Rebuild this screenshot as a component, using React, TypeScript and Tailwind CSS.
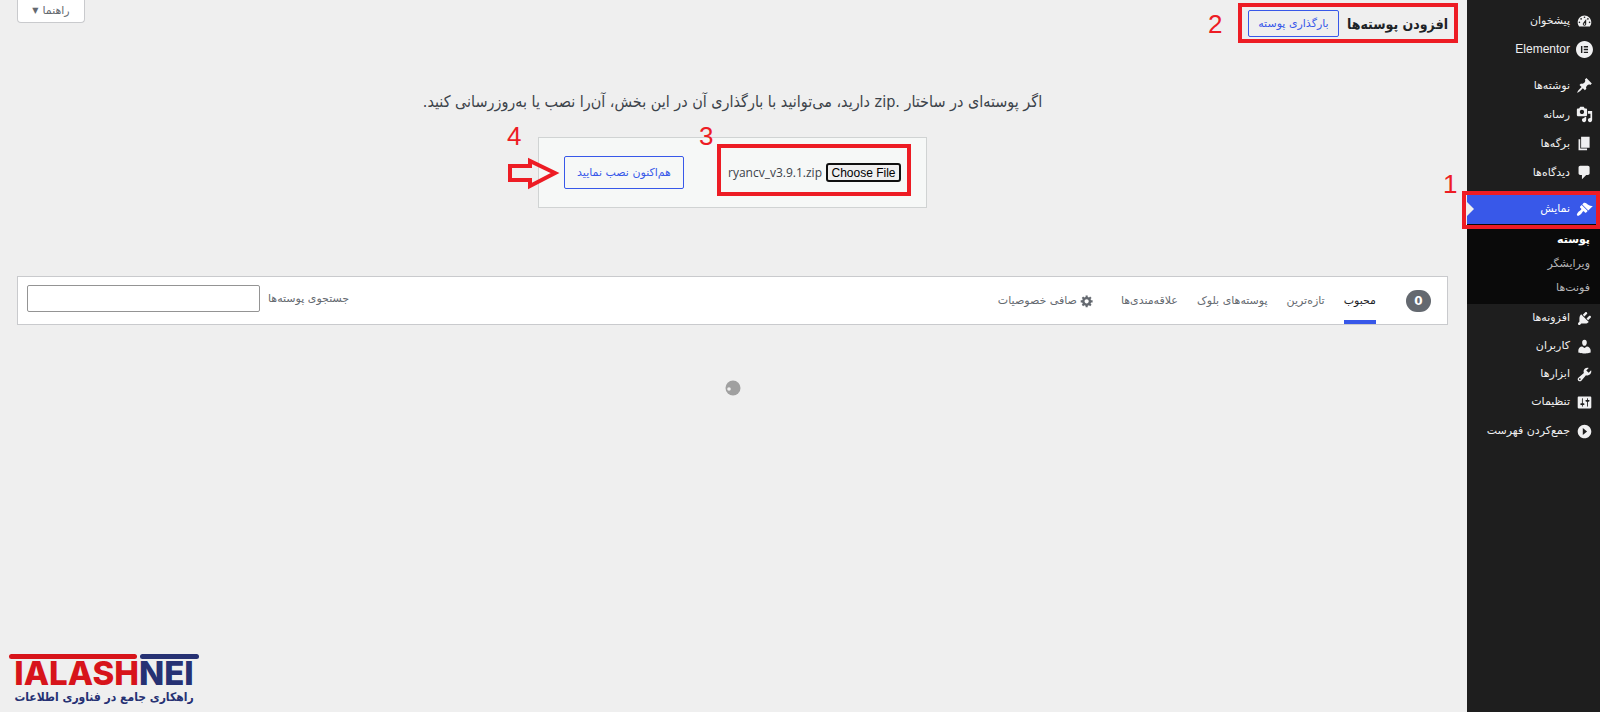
import { useState } from "react";
import { FaElementor } from "react-icons/fa6";

// Dashicons outlines, all on the 20 unit grid.
const ICONS = {
  dashboard:
    "M3.76 16h12.48c1.1-1.37 1.76-3.11 1.76-5 0-4.42-3.58-8-8-8s-8 3.58-8 8c0 1.89.66 3.63 1.76 5zM10 4c.55 0 1 .45 1 1s-.45 1-1 1-1-.45-1-1 .45-1 1-1zM6 6c.55 0 1 .45 1 1s-.45 1-1 1-1-.45-1-1 .45-1 1-1zm8 0c.55 0 1 .45 1 1s-.45 1-1 1-1-.45-1-1 .45-1 1-1zm-5.37 5.55L12 7v6c0 1.1-.9 2-2 2s-2-.9-2-2c0-.57.24-1.08.63-1.45zM4 10c.55 0 1 .45 1 1s-.45 1-1 1-1-.45-1-1 .45-1 1-1zm12 0c.55 0 1 .45 1 1s-.45 1-1 1-1-.45-1-1 .45-1 1-1zm-5 3c0-.55-.45-1-1-1s-1 .45-1 1 .45 1 1 1 1-.45 1-1z",
  post: "M10.44 3.02l1.82-1.82 6.36 6.35-1.83 1.82c-1.05-.68-2.48-.57-3.41.36l-.75.75c-.92.93-1.04 2.35-.35 3.41l-1.83 1.82-2.41-2.41-2.8 2.79c-.42.42-3.38 2.71-3.8 2.29s1.86-3.39 2.28-3.81l2.79-2.79L4.1 9.36l1.83-1.82c1.05.69 2.48.57 3.4-.36l.75-.75c.93-.92 1.05-2.35.36-3.41z",
  media:
    "M13 11V4c0-.55-.45-1-1-1h-1.67L9 1H5L3.67 3H2c-.55 0-1 .45-1 1v7c0 .55.45 1 1 1h10c.55 0 1-.45 1-1zM7 4.5c1.38 0 2.5 1.12 2.5 2.5S8.38 9.5 7 9.5 4.5 8.38 4.5 7 5.62 4.5 7 4.5zM14 6h5v10.5c0 1.38-1.12 2.5-2.5 2.5S14 17.88 14 16.5s1.12-2.5 2.5-2.5c.17 0 .34.02.5.05V9h-3V6zm-4 8.05V13h2v3.5c0 1.38-1.12 2.5-2.5 2.5S7 17.88 7 16.5 8.12 14 9.5 14c.17 0 .34.02.5.05z",
  page: "M6 15V2h10v13H6zm-1 1h8v2H3V5h2v11z",
  comments:
    "M5 2h9c1.1 0 2 .9 2 2v7c0 1.1-.9 2-2 2h-2l-5 5v-5H5c-1.1 0-2-.9-2-2V4c0-1.1.9-2 2-2z",
  appearance:
    "M14.48 11.06L7.41 3.99l1.5-1.5c.5-.56 2.3-.47 3.51.32 1.21.8 1.43 1.28 2.91 2.1 1.18.64 2.45 1.26 4.45.85zm-.71.71L6.7 4.7 4.93 6.47c-.39.39-.39 1.02 0 1.41l1.06 1.06c.39.39.39 1.03 0 1.42-.6.6-1.43 1.11-2.21 1.69-.35.26-.7.53-1.01.84C1.43 14.23.4 16.08 1.4 17.07c.99 1 2.84-.03 4.18-1.36.31-.31.58-.66.85-1.02.57-.78 1.08-1.61 1.69-2.21.39-.39 1.02-.39 1.41 0l1.06 1.06c.39.39 1.02.39 1.41 0z",
  plugins:
    "M13.11 4.36L9.87 7.6 8 5.73l3.24-3.24c.35-.34 1.05-.2 1.56.32.52.51.66 1.21.31 1.55zm-8 1.77l.91-1.12 9.01 9.01-1.19.84c-.71.71-2.63 1.16-3.82 1.16H6.14L4.9 17.26c-.59.59-1.54.59-2.12 0-.59-.58-.59-1.53 0-2.12l1.24-1.24v-3.88c0-1.13.4-3.19 1.09-3.89zm7.26 3.97l3.24-3.24c.34-.35 1.04-.21 1.55.31.52.51.66 1.21.31 1.55l-3.24 3.25z",
  users:
    "M10 9.25c-2.27 0-2.73-3.44-2.73-3.44C7 4.02 7.82 2 9.97 2c2.16 0 2.98 2.02 2.71 3.81 0 0-.41 3.44-2.68 3.44zm0 2.57L12.72 10c2.39 0 4.52 2.33 4.52 4.53v2.49s-3.65 1.13-7.24 1.13c-3.65 0-7.24-1.13-7.24-1.13v-2.49c0-2.25 1.94-4.48 4.47-4.48z",
  tools:
    "M16.68 9.77c-1.34 1.34-3.3 1.67-4.95.99l-5.41 6.52c-.99.99-2.59.99-3.58 0s-.99-2.59 0-3.57l6.52-5.42c-.68-1.65-.35-3.61.99-4.95 1.28-1.28 3.12-1.62 4.72-1.06l-2.89 2.89 2.82 2.82 2.86-2.87c.53 1.58.18 3.39-1.08 4.65zM3.81 16.21c.4.39 1.04.39 1.43 0 .4-.4.4-1.04 0-1.43-.39-.4-1.03-.4-1.43 0-.39.39-.39 1.03 0 1.43z",
  settings:
    "M18 16V4c0-.55-.45-1-1-1H3c-.55 0-1 .45-1 1v12c0 .55.45 1 1 1h14c.55 0 1-.45 1-1zM8 11h1c.55 0 1 .45 1 1s-.45 1-1 1H8v1.5c0 .28-.22.5-.5.5s-.5-.22-.5-.5V13H6c-.55 0-1-.45-1-1s.45-1 1-1h1V5.5c0-.28.22-.5.5-.5s.5.22.5.5V11zm5-2h-1c-.55 0-1-.45-1-1s.45-1 1-1h1V5.5c0-.28.22-.5.5-.5s.5.22.5.5V7h1c.55 0 1 .45 1 1s-.45 1-1 1h-1v5.5c0 .28-.22.5-.5.5s-.5-.22-.5-.5V9z",
  collapse:
    "M10 2c4.42 0 8 3.58 8 8s-3.58 8-8 8-8-3.58-8-8 3.58-8 8-8zM8 6v8l5-4z",
  generic:
    "M18 12h-2.18c-.17.7-.44 1.35-.81 1.93l1.54 1.54-2.1 2.1-1.54-1.54c-.58.36-1.23.63-1.91.79V19H8v-2.18c-.68-.16-1.33-.43-1.91-.79l-1.54 1.54-2.12-2.12 1.54-1.54c-.36-.58-.63-1.23-.79-1.91H1V9.03h2.17c.16-.7.44-1.35.8-1.94L2.43 5.55l2.1-2.1 1.54 1.54c.58-.37 1.24-.64 1.93-.81V2h3v2.18c.68.16 1.33.43 1.91.79l1.54-1.54 2.12 2.12-1.54 1.54c.36.59.64 1.24.8 1.94H18V12zm-8.5 1.5c1.66 0 3-1.34 3-3s-1.34-3-3-3-3 1.34-3 3 1.34 3 3 3z",
};

type IconName = keyof typeof ICONS;

function Dashicon({ name, className }: { name: IconName; className?: string }) {
  return (
    <svg viewBox="0 0 20 20" fill="currentColor" fillRule="evenodd" className={className} aria-hidden="true">
      <path d={ICONS[name]} />
    </svg>
  );
}

function MenuItem({ icon, label }: { icon: IconName; label: string }) {
  return (
    <li>
      <a href="#" className="flex h-full items-center gap-1.5 pr-[7px] text-[#f0f0f1]">
        <Dashicon name={icon} className="h-[17px] w-[17px] shrink-0" />
        {label}
      </a>
    </li>
  );
}

// Red tutorial number laid over the screen.
function Step({ className, children }: { className: string; children: React.ReactNode }) {
  return (
    <span
      className={`absolute font-['Liberation_Sans',sans-serif] text-[26px] leading-7 font-normal text-[#ed1c24] ${className}`}
    >
      {children}
    </span>
  );
}

function Sidebar() {
  return (
    <nav
      aria-label="فهرست"
      className="w-[133px] shrink-0 bg-[#1e1e1e] pt-[7px] text-[11px] leading-4 whitespace-nowrap"
    >
      <ul className="grid auto-rows-[28px]">
        <MenuItem icon="dashboard" label="پیشخوان" />
        <li>
          <a
            href="#"
            className="flex h-full items-center gap-1.5 pr-[7px] font-['Liberation_Sans',sans-serif] text-[12px] text-[#f0f0f1]"
          >
            <FaElementor className="h-[17px] w-[17px] shrink-0" />
            Elementor
          </a>
        </li>
      </ul>
      <ul className="mt-2 grid auto-rows-[29px]">
        <MenuItem icon="post" label="نوشته‌ها" />
        <MenuItem icon="media" label="رسانه" />
        <MenuItem icon="page" label="برگه‌ها" />
        <MenuItem icon="comments" label="دیدگاه‌ها" />
      </ul>
      <div className="relative mt-[7px]">
        <a href="#" className="flex h-[30px] items-center gap-1.5 bg-[#3858e9] pr-[7px] text-white">
          <Dashicon name="appearance" className="h-[17px] w-[17px] shrink-0" />
          نمایش
        </a>
        <span className="absolute top-2 left-0 border-y-[7px] border-l-[7px] border-y-transparent border-l-[#efefef]" />
        <span className="absolute -top-[3px] right-0 -bottom-[5px] -left-[5px] border-4 border-[#ed1c24]" />
        <Step className="-top-6 -left-6">1</Step>
      </div>
      <ul className="grid auto-rows-[24px] bg-[#0a0a0a] pt-1 pr-[10px] pb-1 text-[#b4b4b6]">
        <li>
          <a href="#" className="flex h-full items-center font-bold text-white">
            پوسته
          </a>
        </li>
        <li>
          <a href="#" className="flex h-full items-center">
            ویرایشگر
          </a>
        </li>
        <li>
          <a href="#" className="flex h-full items-center">
            فونت‌ها
          </a>
        </li>
      </ul>
      <ul className="grid auto-rows-[28px]">
        <MenuItem icon="plugins" label="افزونه‌ها" />
        <MenuItem icon="users" label="کاربران" />
        <MenuItem icon="tools" label="ابزارها" />
        <MenuItem icon="settings" label="تنظیمات" />
      </ul>
      <button type="button" className="flex h-[30px] items-center gap-1.5 pr-[7px] text-[#f0f0f1]">
        <Dashicon name="collapse" className="h-[17px] w-[17px] shrink-0" />
        جمع‌کردن فهرست
      </button>
    </nav>
  );
}

const TABS = ["محبوب", "تازه‌ترین", "پوسته‌های بلوک", "علاقه‌مندی‌ها"];

function FilterBar() {
  const [active, setActive] = useState(TABS[0]);
  const [query, setQuery] = useState("");

  return (
    <div className="flex h-[49px] items-stretch justify-between border border-[#c9cacd] bg-white pr-4 pl-[9px] text-[11px] leading-4 text-[#646970]">
      <div className="flex items-stretch">
        <span className="ml-[30px] flex h-[22px] w-[25px] items-center justify-center self-center rounded-full bg-[#646970] text-[12px] font-bold text-white">
          0
        </span>
        <div className="flex gap-[19px]">
          {TABS.map((tab) => (
            <button
              key={tab}
              type="button"
              onClick={() => setActive(tab)}
              className={
                tab === active
                  ? "border-b-4 border-[#3858e9] pt-1 text-[#1d2327]"
                  : "border-b-4 border-transparent pt-1"
              }
            >
              {tab}
            </button>
          ))}
        </div>
        <button type="button" className="mr-[27px] flex items-center gap-[3px]">
          <Dashicon name="generic" className="h-[14px] w-[14px]" />
          صافی خصوصیات
        </button>
      </div>
      <div className="flex items-center gap-2 pb-1">
        <label htmlFor="theme-search">جستجوی پوسته‌ها</label>
        <input
          id="theme-search"
          type="search"
          value={query}
          onChange={(e) => setQuery(e.target.value)}
          className="h-[27px] w-[233px] rounded-[2px] border border-[#949494] bg-white px-2 outline-none"
        />
      </div>
    </div>
  );
}

function UploadForm() {
  const [file, setFile] = useState("ryancv_v3.9.1.zip");

  return (
    <form
      onSubmit={(e) => e.preventDefault()}
      className="relative mx-auto flex h-[71px] w-[389px] items-center justify-between border border-[#d0d3d3] bg-[#f6f8f7] px-[25px]"
    >
      <div className="relative flex items-center gap-1">
        <input
          id="theme-zip"
          type="file"
          accept=".zip"
          className="sr-only"
          onChange={(e) => setFile(e.target.files?.[0]?.name ?? "")}
        />
        <label
          htmlFor="theme-zip"
          className="flex h-[19px] w-[75px] items-center justify-center rounded-[3px] border-2 border-[#101010] bg-[#efefef] font-['Liberation_Sans',sans-serif] text-[12px] leading-4 text-black"
        >
          Choose File
        </label>
        <span className="font-['Open_Sans',sans-serif] text-[12px] leading-4 text-[#3c434a]" dir="ltr">
          {file}
        </span>
        <span className="absolute -top-[19px] -right-[10px] -bottom-[14px] -left-[11px] border-4 border-[#ed1c24]" />
      </div>
      <button
        type="submit"
        className="h-[33px] w-[120px] rounded-[2px] border border-[#3858e9] text-[11px] leading-4 text-[#3858e9]"
      >
        هم‌اکنون نصب نمایید
      </button>
      <Step className="-top-4 left-[160px]">3</Step>
      <Step className="-top-4 -left-8">4</Step>
      <svg viewBox="0 0 52 34" className="absolute top-[18px] -left-[31px] h-[34px] w-[52px]" fill="none" aria-hidden="true">
        <path d="M2 10h20V5l25 12-25 13v-6H2z" stroke="#ed1c24" strokeWidth="4" />
      </svg>
    </form>
  );
}

function Logo() {
  return (
    <div dir="ltr" className="mb-[5px] w-[190px] self-end">
      <div className="flex gap-[3px]">
        <span className="h-[5px] w-32 rounded-full bg-[#d7141a]" />
        <span className="h-[5px] flex-1 rounded-full bg-[#263173]" />
      </div>
      <div className="text-center font-['Inter',sans-serif] text-[33px] leading-7 font-extrabold whitespace-nowrap text-[#d7141a]">
        IALASH<span className="text-[#263173]">NEI</span>
      </div>
      <p
        dir="rtl"
        className="text-center font-['DejaVu_Sans_Condensed','DejaVu_Sans',sans-serif] text-[12px] leading-5 font-bold whitespace-nowrap text-[#263173]"
      >
        راهکاری جامع در فناوری اطلاعات
      </p>
    </div>
  );
}

export default function App() {
  return (
    <div
      dir="rtl"
      className="flex min-h-screen overflow-hidden bg-[#efefef] font-['DejaVu_Sans',sans-serif] text-[#3c434a]"
    >
      <Sidebar />
      <main className="flex min-w-0 flex-1 flex-col pr-[19px]">
        <header className="flex items-start justify-between pl-[17px]">
          <div className="relative mt-[10px] flex h-[27px] items-center gap-2">
            <h1 className="font-['DejaVu_Sans_Condensed','DejaVu_Sans',sans-serif] text-[14px] leading-6 font-bold text-[#1d2327]">
              افزودن پوسته‌ها
            </h1>
            <button
              type="button"
              className="h-[27px] w-[91px] rounded-[2px] border border-[#3858e9] text-[11px] leading-4 text-[#3858e9]"
            >
              بارگذاری پوسته
            </button>
            <span className="absolute -inset-x-[10px] -top-[7px] -bottom-[6px] border-4 border-[#ed1c24]" />
            <Step className="top-0 -left-10">2</Step>
          </div>
          <button
            type="button"
            className="flex h-[23px] w-[68px] items-center justify-center gap-1 rounded-b-[4px] border border-t-0 border-[#c9cacd] bg-white text-[11px] leading-4 text-[#646970]"
          >
            راهنما <span className="text-[8px]">▼</span>
          </button>
        </header>

        <p className="mt-[53px] pl-[17px] text-center font-['DejaVu_Sans_Condensed','DejaVu_Sans',sans-serif] text-[16px] leading-6">
          اگر پوسته‌ای در ساختار .zip دارید، می‌توانید با بارگذاری آن در این بخش، آن‌را نصب یا به‌روزرسانی کنید.
        </p>
        <div className="mt-[23px] pl-[17px]">
          <UploadForm />
        </div>
        <div className="mt-[68px] pl-[17px]">
          <FilterBar />
        </div>

        <svg viewBox="0 0 16 16" className="mt-[55px] ml-[17px] h-4 w-4 self-center" role="img" aria-label="loading">
          <circle cx="8" cy="8" r="7.500" fill="#a0a0a0" />
          <circle cx="4" cy="9" r="1.800" fill="#efefef" />
        </svg>

        <div className="mt-auto flex flex-col pl-[9px]">
          <Logo />
        </div>
      </main>
    </div>
  );
}
